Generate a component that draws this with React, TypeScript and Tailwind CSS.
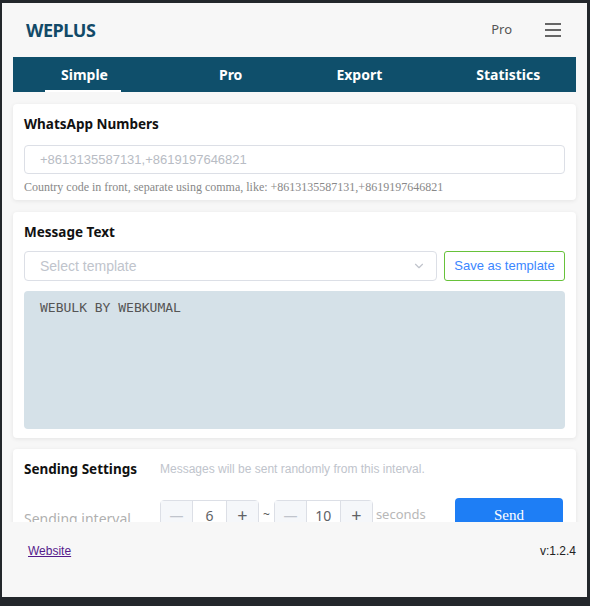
import { ChevronDown } from 'lucide-react'

const TABS = [
  { label: 'Simple', ml: 'ml-[48px]' },
  { label: 'Pro', ml: 'ml-[111px]' },
  { label: 'Export', ml: 'ml-[94px]' },
  { label: 'Statistics', ml: 'ml-[94px]' },
]

function Stepper({ value }: { value: string }) {
  return (
    <div className="flex h-[30px] items-stretch rounded border border-[#dcdfe6] bg-white text-[14px] text-[#606266]">
      <span className="flex w-[32px] items-center justify-center border-r border-[#dcdfe6] bg-[#f5f7fa] text-[#c0c4cc]">—</span>
      <span className="flex w-[33px] items-center justify-center">{value}</span>
      <span className="flex w-[32px] items-center justify-center border-l border-[#dcdfe6] bg-[#f5f7fa] text-[18px] text-[#606266]">+</span>
    </div>
  )
}

export default function App() {
  return (
    <div className="h-[606px] w-[590px] overflow-hidden bg-[#23272b] pl-[2px] pt-[3px]" style={{ fontFamily: '"Noto Sans", "Open Sans", sans-serif' }}>
      <div className="flex h-[594px] w-[585px] flex-col bg-[#f7f7f7]">
        <header className="flex h-[54px] items-center pl-[24px] pr-[26px]">
          <span className="text-[18px] font-bold tracking-tight text-[#124a68]">WEPLUS</span>
          <span className="ml-auto text-[13px] text-[#555]">Pro</span>
          <div className="ml-[33px] flex w-[16px] flex-col gap-[4px]">
            <span className="h-[2px] bg-[#666]" />
            <span className="h-[2px] bg-[#666]" />
            <span className="h-[2px] bg-[#666]" />
          </div>
        </header>

        <nav className="relative mx-[11px] flex h-[35px] items-center bg-[#0f4f6b] text-[14px] font-bold text-white">
          {TABS.map((t) => (
            <span key={t.label} className={t.ml}>{t.label}</span>
          ))}
          <span className="absolute bottom-0 left-[32px] h-[2px] w-[76px] bg-white" />
        </nav>

        <div className="h-[430px] overflow-hidden px-[11px] pt-[12px]">
          <section className="rounded bg-white px-[11px] pb-[5px] pt-[10px] shadow-[0_1px_4px_rgba(0,0,0,0.08)]">
            <h2 className="text-[13.5px] font-bold leading-[20px] text-[#111]">WhatsApp Numbers</h2>
            <div className="mt-[11px] flex h-[29px] items-center rounded border border-[#dcdfe6] px-[15px] text-[13px] text-[#b8bcc4]" style={{ fontFamily: '"Liberation Sans", Arial, sans-serif' }}>
              +8613135587131,+8619197646821
            </div>
            <p className="mt-[5px] text-[12px] leading-[16px] text-[#888]" style={{ fontFamily: '"Liberation Serif", serif' }}>
              Country code in front, separate using comma, like: +8613135587131,+8619197646821
            </p>
          </section>

          <section className="mt-[12px] rounded bg-white px-[11px] pb-[9px] pt-[10px] shadow-[0_1px_4px_rgba(0,0,0,0.08)]">
            <h2 className="text-[13.5px] font-bold leading-[20px] text-[#111]">Message Text</h2>
            <div className="mt-[9px] flex gap-[7px]" style={{ fontFamily: '"Liberation Sans", Arial, sans-serif' }}>
              <div className="flex h-[30px] flex-1 items-center rounded border border-[#dcdfe6] pl-[15px] pr-[10px] text-[14px] text-[#c0c4cc]">
                Select template
                <ChevronDown className="ml-auto" size={14} color="#c0c4cc" />
              </div>
              <div className="flex h-[30px] w-[121px] items-center justify-center rounded-[3px] border border-[#67c23a] text-[13px] text-[#3a86ff]">
                Save as template
              </div>
            </div>
            <div className="mt-[10px] h-[138px] rounded bg-[#d5e1e8] px-[16px] py-[7px] text-[13px] text-[#555]" style={{ fontFamily: '"DejaVu Sans Mono", "Liberation Mono", monospace' }}>
              WEBULK BY WEBKUMAL
            </div>
          </section>

          <section className="mt-[11px] rounded bg-white px-[11px] pt-[10px] shadow-[0_1px_4px_rgba(0,0,0,0.08)]">
            <div className="flex items-center">
              <h2 className="w-[136px] text-[13.5px] font-bold leading-[20px] text-[#111]">Sending Settings</h2>
              <span className="text-[12px] text-[#c0c4cc]" style={{ fontFamily: '"Liberation Sans", Arial, sans-serif' }}>Messages will be sent randomly from this interval.</span>
            </div>
            <div className="mt-[19px] flex items-center">
              <span className="mt-[6px] w-[136px] text-[14px] text-[#b0b0b0]">Sending interval</span>
              <Stepper value="6" />
              <span className="mx-[4px] text-[12px] text-[#555]">~</span>
              <Stepper value="10" />
              <span className="ml-[3px] text-[13px] text-[#b8b8b8]">seconds</span>
              <div className="ml-auto mr-[2px] flex h-[34px] w-[108px] items-center justify-center rounded bg-[#1e7ef5] text-[15px] text-white" style={{ fontFamily: '"Liberation Serif", serif' }}>
                Send
              </div>
            </div>
          </section>
        </div>

        <footer className="flex items-center pl-[26px] pr-[11px] pt-[20px] text-[12px]" style={{ fontFamily: '"Liberation Sans", Arial, sans-serif' }}>
          <a className="text-[#551a8b] underline">Website</a>
          <span className="ml-auto text-[#222]">v:1.2.4</span>
        </footer>
      </div>
    </div>
  )
}
